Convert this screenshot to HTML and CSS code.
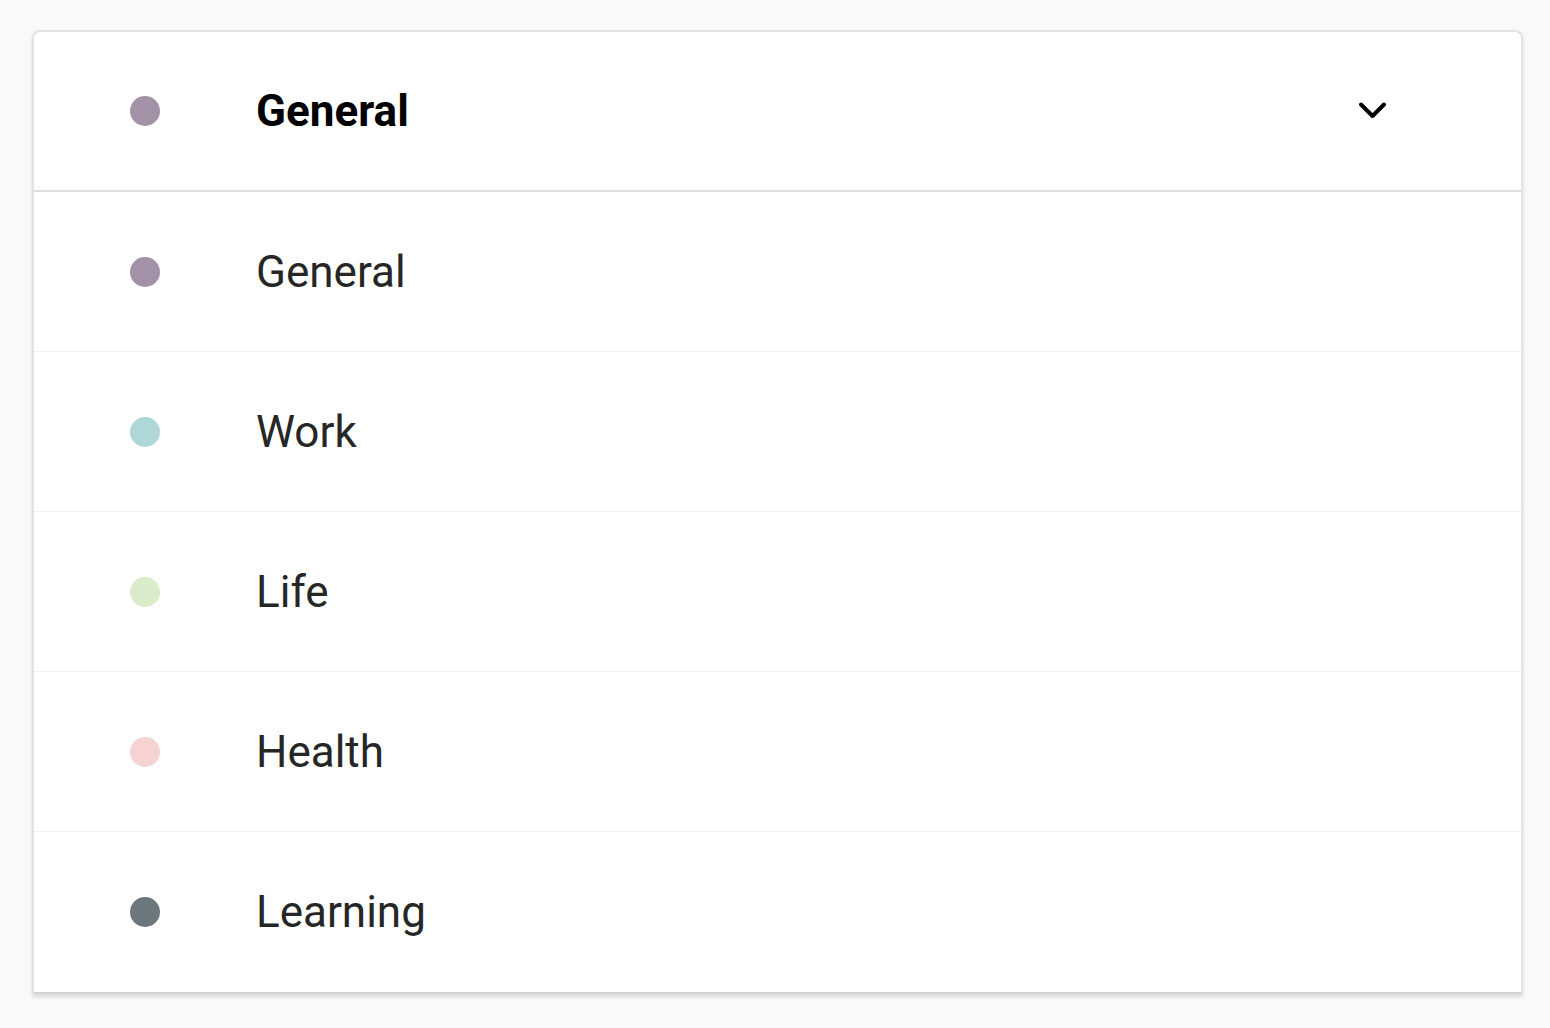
FILE: index.html
```html
<!DOCTYPE html>
<html>
<head>
<meta charset="utf-8">
<link rel="stylesheet" href="styles.css">
</head>
<body>
<div class="card">
  <div class="header">
    <span class="dot purple"></span>
    <span class="label bold">General</span>
    <svg class="chev" width="32" height="20" viewBox="0 0 32 20"><polyline points="6,3.5 17.5,15 29,3.5" fill="none" stroke="#000" stroke-width="4" stroke-linecap="round" stroke-linejoin="round"/></svg>
  </div>
  <ul class="list">
    <li class="row"><span class="dot purple"></span><span class="label">General</span></li>
    <li class="row"><span class="dot teal"></span><span class="label">Work</span></li>
    <li class="row"><span class="dot green"></span><span class="label">Life</span></li>
    <li class="row"><span class="dot pink"></span><span class="label">Health</span></li>
    <li class="row"><span class="dot gray"></span><span class="label">Learning</span></li>
  </ul>
</div>
</body>
</html>
```
FILE: styles.css
```css
html, body { margin: 0; padding: 0; }
body {
  background: #f9f9f9;
  font-family: Roboto, "Liberation Sans", sans-serif;
  padding: 30px 27px 0 32px;
  height: 1028px;
  box-sizing: border-box;
}
.card {
  width: 1491px;
  background: #fff;
  border: 2px solid #e2e2e2;
  border-bottom: none;
  border-radius: 8px 8px 0 0;
  box-sizing: border-box;
  box-shadow: 0 3px 4px rgba(0,0,0,0.12);
}
.header {
  height: 158px;
  display: flex;
  align-items: center;
  padding-left: 96px;
  padding-right: 134px;
  border-bottom: 2px solid #dcdcdc;
}
.dot {
  width: 30px;
  height: 30px;
  border-radius: 50%;
  flex: none;
  margin-right: 96px;
}
.purple { background: #a391a8; }
.teal { background: #aed8d8; }
.green { background: #d9ebc8; }
.pink { background: #f5d3d3; }
.gray { background: #6b767d; }
.label {
  font-size: 44px;
  color: #262626;
  flex: 1;
}
.bold { font-weight: 700; color: #000; }
.chev { flex: none; }
.list {
  list-style: none;
  margin: 0;
  padding: 0;
  border-bottom: 2px solid #d2d2d2;
}
.row {
  height: 159px;
  display: flex;
  align-items: center;
  padding-left: 96px;
  border-bottom: 1px solid #f1f1f1;
}
.row:last-child { border-bottom: none; height: 160px; }
```
